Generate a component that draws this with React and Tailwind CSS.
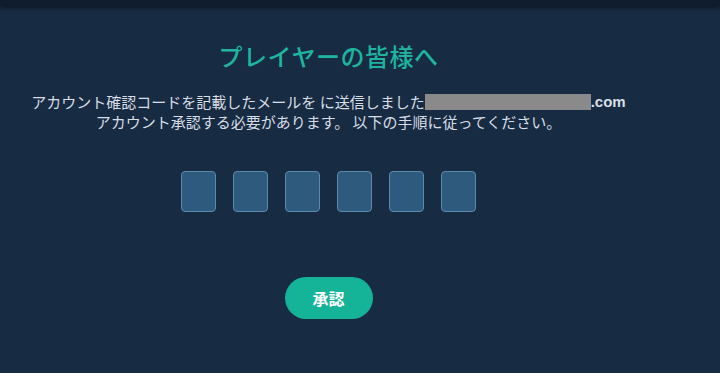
export default function App() {
  const cells = [0, 1, 2, 3, 4, 5];

  return (
    <div
      className="w-[720px] h-[373px] bg-[#172b42] flex flex-col overflow-hidden"
      style={{ fontFamily: '"Noto Sans CJK JP", "Noto Sans", sans-serif' }}
    >
      <div className="h-[6px] bg-[#0f1c2e] shadow-[0_2px_4px_rgba(0,0,0,0.45)] shrink-0" />

      <div className="w-[657px] flex flex-col items-center">
        <h1 className="mt-[30px] text-[24px] leading-[40px] font-medium text-[#1fb3a0] tracking-[0.5px]">
          プレイヤーの皆様へ
        </h1>

        <div className="mt-[16px] text-[15px] leading-[20px] text-[#d7dee6] text-center">
          <p className="flex items-center justify-center">
            <span>アカウント確認コードを記載したメールを に送信しました</span>
            <span className="inline-block w-[166px] h-[16px] bg-[#8a8a8a]" />
            <span className="font-bold" style={{ fontFamily: '"Liberation Sans", sans-serif' }}>
              .com
            </span>
          </p>
          <p>アカウント承認する必要があります。 以下の手順に従ってください。</p>
        </div>

        <div className="mt-[39px] flex gap-[17px]">
          {cells.map((i) => (
            <div
              key={i}
              className="w-[35px] h-[41px] rounded-[4px] bg-[#2d5a7d] border border-[#5d89aa]"
            />
          ))}
        </div>

        <button className="mt-[65px] w-[88px] h-[42px] rounded-full bg-[#15b398] text-white text-[16px] font-bold">
          承認
        </button>
      </div>
    </div>
  );
}
